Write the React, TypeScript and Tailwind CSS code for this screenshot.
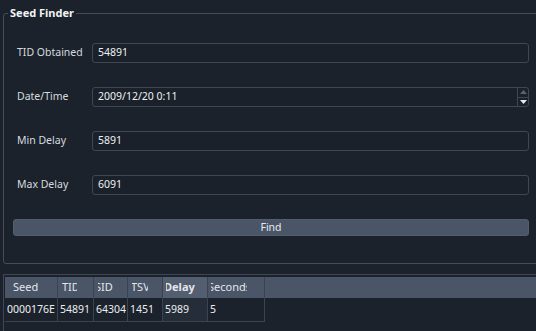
import React from "react";

const font = { fontFamily: '"Noto Sans", "Open Sans", "Liberation Sans", sans-serif' };

function Field({ label, value, spin }: { label: string; value: string; spin?: boolean }) {
  return (
    <div className="flex items-center h-[20px]">
      <div className="w-[75px] text-[10.5px] text-[#d6dade]">{label}</div>
      <div className="relative w-[437px] h-[20px] rounded-[3px] border border-[#3f4852] bg-[#1a212a] flex items-center pl-[5px] text-[10.5px] text-[#eef0f2]">
        {value}
        {spin && (
          <div className="absolute right-0 top-0 h-full w-[11px] border-l border-[#3f4852] flex flex-col">
            <div className="flex-1 flex items-center justify-center border-b border-[#3f4852]">
              <svg width="7" height="4" viewBox="0 0 7 4"><path d="M0 4 L3.5 0 L7 4 Z" fill="#5b6471" /></svg>
            </div>
            <div className="flex-1 flex items-center justify-center">
              <svg width="7" height="4" viewBox="0 0 7 4"><path d="M0 0 L7 0 L3.5 4 Z" fill="#e8eaec" /></svg>
            </div>
          </div>
        )}
      </div>
    </div>
  );
}

type H = { text: string; w: number; pl: number; clip?: number; shift?: number; bold?: boolean; light?: boolean };

const headers: H[] = [
  { text: "Seed", w: 53, pl: 8 },
  { text: "TID", w: 36, pl: 4, clip: 15 },
  { text: "SID", w: 34, pl: 4, clip: 15, shift: -3 },
  { text: "TSV", w: 35, pl: 4, clip: 16, shift: -1 },
  { text: "Delay", w: 45, pl: 3, clip: 29, shift: -2, bold: true, light: true },
  { text: "Seconds", w: 57, pl: 3, clip: 36, shift: -3 },
];

const row = ["0000176E", "54891", "64304", "1451", "5989", "5"];

export default function App() {
  return (
    <div className="w-[536px] h-[331px] bg-[#1b222c] overflow-hidden text-[#e6e8ea]" style={font}>
      <fieldset className="ml-[3px] mt-[6px] w-[545px] h-[258px] border border-[#444d57] rounded-[3px]">
        <legend className="ml-[4px] px-[2px] text-[11px] leading-[14px] font-bold text-[#f2f3f5]">Seed Finder</legend>
        <div className="pl-[13px] pt-[23px] flex flex-col gap-[24px]">
          <Field label="TID Obtained" value="54891" />
          <Field label="Date/Time" value="2009/12/20 0:11" spin />
          <Field label="Min Delay" value="5891" />
          <Field label="Max Delay" value="6091" />
          <div className="-ml-[4px] w-[516px] h-[17px] rounded-[3px] bg-[#4a5667] border border-[#525e6e] flex items-center justify-center text-[10.5px] text-[#e8eaee]">
            Find
          </div>
        </div>
      </fieldset>
      <div className="ml-[3px] mt-[10px] w-[540px] h-[60px] border-l border-t border-[#3f4852] pt-[2px] pl-[1px]">
        <div className="flex h-[21px] bg-[#4a5567]">
          {headers.map((h, i) => (
            <div
              key={i}
              className={`h-full flex items-center border-r border-[#3a4350] text-[11px] text-[#e4e7ea] ${h.light ? "bg-[#535e70]" : ""} ${h.bold ? "font-bold" : ""}`}
              style={{ width: h.w, paddingLeft: h.pl }}
            >
              <span className="overflow-hidden whitespace-nowrap block" style={{ width: h.clip }}>
                <span className="block" style={{ marginLeft: h.shift ?? 0 }}>{h.text}</span>
              </span>
            </div>
          ))}
        </div>
        <div className="flex h-[24px]">
          {row.map((v, i) => (
            <div
              key={i}
              className={`h-full flex items-center border-r border-b border-[#3a4350] text-[10.5px] text-[#eceef0] pl-[2px] overflow-hidden whitespace-nowrap ${i === 4 ? "bg-[#252d38]" : "bg-[#1b222c]"}`}
              style={{ width: headers[i].w }}
            >
              {v}
            </div>
          ))}
        </div>
      </div>
    </div>
  );
}
